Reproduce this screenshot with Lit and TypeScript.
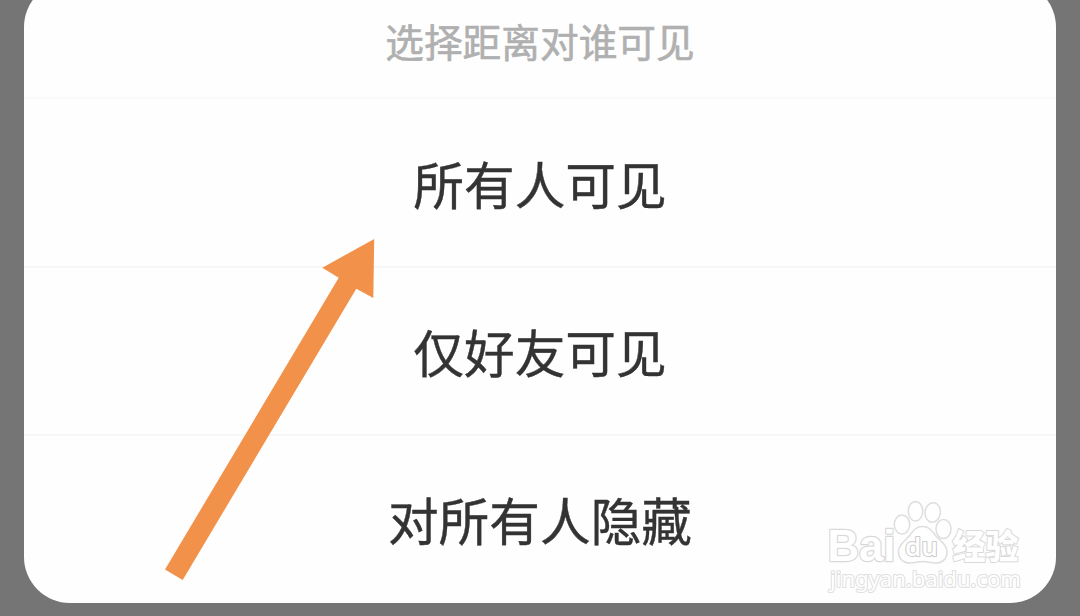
import { LitElement, html, css } from "lit";
import { customElement, state } from "lit/decorators.js";

@customElement("baidu-watermark")
class BaiduWatermark extends LitElement {
  static styles = css`
    :host { display: block; }
    svg { display: block; overflow: visible; }
    .shape { fill: #fff; stroke: #dedede; stroke-width: 1.5; }
    .word { fill: #fff; stroke: #d9d9d9; stroke-width: 2; stroke-linejoin: round; paint-order: stroke; }
    .latin { font: 700 44px "Liberation Sans", Arial, sans-serif; stroke-width: 2.4; }
    .du { font: 600 25px "Open Sans", sans-serif; stroke: #cccccc; }
    .han { font: 900 34px "Noto Sans CJK SC", sans-serif; }
    .url { font: 400 21px "Noto Sans", sans-serif; stroke: #e0e0e0; }
  `;
  render() {
    return html`
      <svg width="200" height="104" viewBox="0 0 200 104" aria-label="Baidu">
        <text class="word latin" x="1.500" y="69.500" textLength="68" lengthAdjust="spacingAndGlyphs">Bai</text>
        <ellipse class="shape" cx="76" cy="33.500" rx="7.700" ry="9.600" />
        <ellipse class="shape" cx="89.500" cy="20.200" rx="7.200" ry="9.800" />
        <ellipse class="shape" cx="106.700" cy="21.500" rx="7.600" ry="9.800" transform="rotate(8 106.700 21.500)" />
        <ellipse class="shape" cx="117.500" cy="38" rx="7.500" ry="9.500" />
        <path class="shape" d="M96.500 35.500C89.500 35.500 87 40 83.500 44.500C79 50 73 53 72.500 60C72 67 77 72 84 72C89 72 92 70.500 96.500 70.500C101 70.500 105 72 110 72C117 72 121.500 67 121 60C120.500 53 114 50 109.500 44.500C106 40 103.500 35.500 96.500 35.500Z" />
        <text class="word du" x="79" y="65" textLength="33" lengthAdjust="spacingAndGlyphs">du</text>
        <text class="word han" x="126.500" y="67.500" textLength="66" lengthAdjust="spacingAndGlyphs">经验</text>
        <text class="word url" x="4" y="95.500" textLength="191" lengthAdjust="spacingAndGlyphs">jingyan.baidu.com</text>
      </svg>
    `;
  }
}

@customElement("app-root")
class AppRoot extends LitElement {
  static styles = css`
    :host {
      display: block;
      position: relative;
      box-sizing: border-box;
      height: 616px;
      padding: 0 24px;
      overflow: hidden;
      background: #757575;
      font-family: "Noto Sans CJK SC", sans-serif;
    }
    .sheet {
      margin-top: -19px;
      height: 621.5px;
      border-radius: 46px;
      background: #fefefe;
      display: grid;
      grid-template-rows: 118px 168.500px 168px 1fr;
    }
    .title, .option {
      box-sizing: border-box;
      display: flex;
      justify-content: center;
      align-items: center;
      line-height: 1;
      white-space: nowrap;
    }
    .title {
      padding-top: 2px;
      color: #b0b0b0;
      font-size: 38.7px;
      -webkit-text-stroke: 0.6px #b0b0b0;
      border-bottom: 2px solid #fafafa;
    }
    .option {
      padding-top: 1.6px;
      color: #333;
      font-size: 50.7px;
      -webkit-text-stroke: 0.4px #333;
    }
    .title + .option { padding-top: 3px; }
    .option:last-child { padding-top: 0; }
    .option:not(:last-child) { border-bottom: 2px solid #f7f7f7; }
    .arrow { position: absolute; left: 160px; top: 234px; fill: #f2924a; }
    .mark { position: absolute; left: 826px; top: 491px; }
  `;

  @state() private options = ["所有人可见", "仅好友可见", "对所有人隐藏"];

  render() {
    return html`
      <div class="sheet">
        <div class="title">选择距离对谁可见</div>
        ${this.options.map((o) => html`<div class="option">${o}</div>`)}
      </div>
      <svg class="arrow" width="220" height="350" viewBox="0 0 220 350">
        <path d="M214.200 5L213.300 64L196.300 54.700L22.700 346L5 335.500L178.700 43.700L162.300 33.700Z" />
      </svg>
      <baidu-watermark class="mark"></baidu-watermark>
    `;
  }
}
